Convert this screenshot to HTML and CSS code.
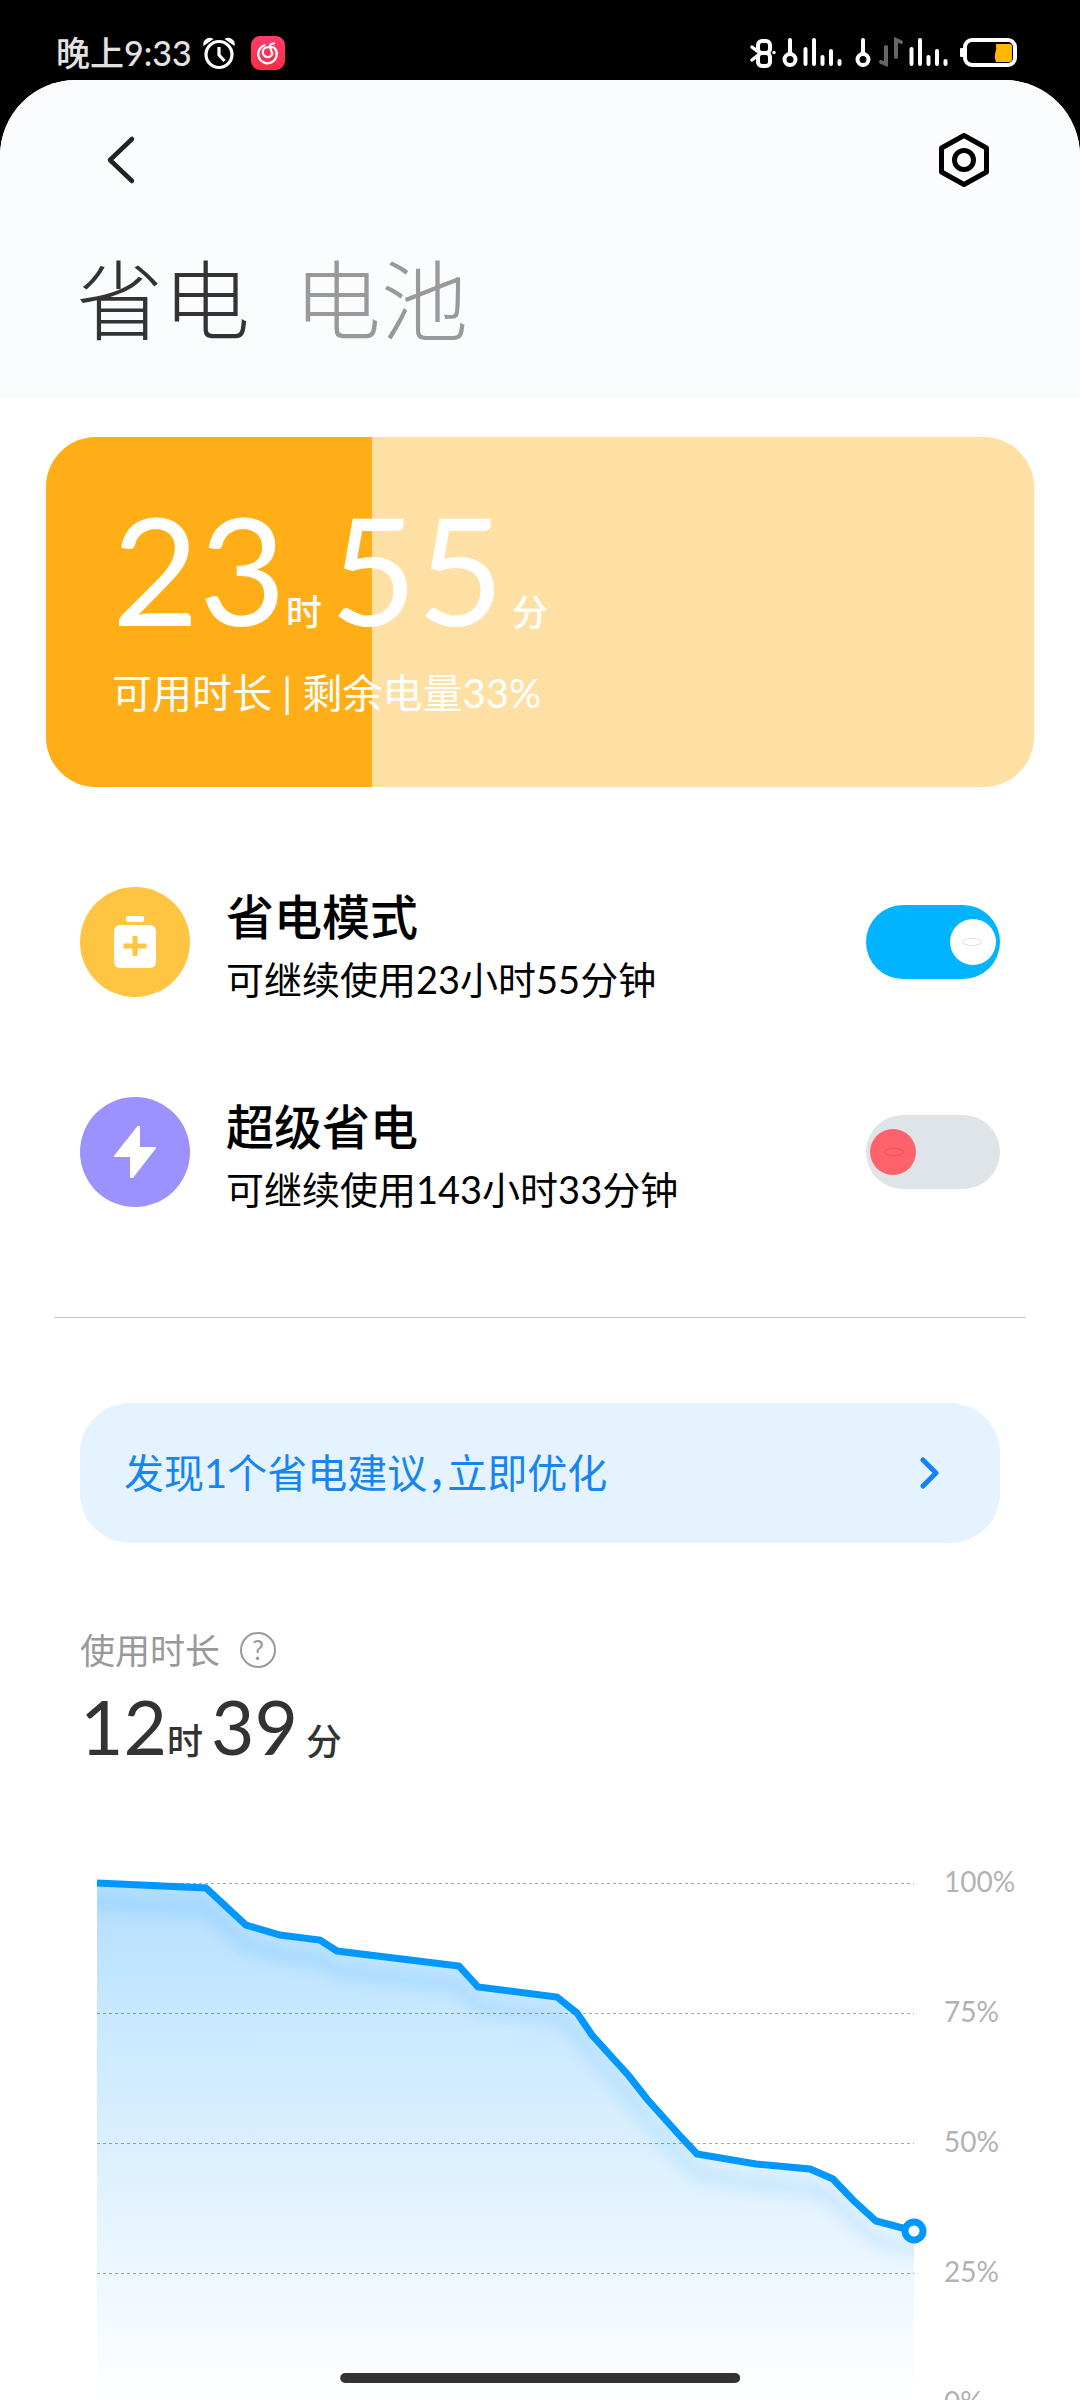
FILE: index.html
```html
<!DOCTYPE html>
<html lang="zh-CN">
<head>
<meta charset="utf-8">
<meta name="viewport" content="width=device-width, initial-scale=1">
<title>省电</title>
<link rel="stylesheet" href="styles.css">
</head>
<body>
<div class="screen">
  <div class="status">
    <div class="status-side">
      <span class="clock">晚上9:33</span>
      <svg class="status-alarm" width="34" height="34" viewBox="0 0 34 34" aria-hidden="true">
        <path d="M1.500 10a6.500 6.500 0 0 1 10-7zM32.500 10a6.500 6.500 0 0 0-10-7z" fill="#fff"/>
        <circle cx="17" cy="18.500" r="13" fill="#000" stroke="#fff" stroke-width="3.200"/>
        <path d="M17 11v8l5.500 6" fill="none" stroke="#fff" stroke-width="3.200"/>
      </svg>
      <svg class="status-music" width="34" height="34" viewBox="0 0 34 34" aria-hidden="true">
        <defs><linearGradient id="music" x1="0" y1="0" x2="0" y2="1"><stop offset="0" stop-color="#fd3d6c"/><stop offset="1" stop-color="#fb2c44"/></linearGradient></defs>
        <rect width="34" height="34" rx="9" fill="url(#music)"/>
        <path d="M13.500 9.200A9.300 9.300 0 1 0 24 12.500Q21.500 10 17.500 11.300a4.900 4.900 0 1 0 3.800 6.500Q20 14 19 10.500q0-3.200 4-3" fill="none" stroke="#fff" stroke-width="2.200" stroke-linecap="round"/>
      </svg>
    </div>
    <svg class="status-icons" width="270" height="34" viewBox="748 36 270 34" aria-hidden="true">
      <g fill="none" stroke="#fff" stroke-width="4" stroke-linecap="round" stroke-linejoin="round">
        <rect x="758" y="41" width="12" height="12" rx="4"/>
        <rect x="758" y="53" width="12" height="13" rx="4"/>
        <path d="M752 47l5 4M752 60l5-4" stroke-width="3.500"/>
        <path d="M790 40v13M863 40v13"/>
        <circle cx="790" cy="59.500" r="5.500"/><circle cx="863" cy="59.500" r="5.500"/>
        <path d="M805.500 49v15M814 40v24M822.500 57v7M831 51v13M839.500 61v3M911.500 49v15M920 40v24M928.500 57v7M937 51v13M945.500 61v3"/>
        <rect x="965" y="40" width="50" height="25" rx="7"/>
      </g>
      <circle cx="774" cy="52.500" r="1.700" fill="#fff"/>
      <path d="M886 47v17l-5-2M896 57V40l5 2" fill="none" stroke="#666" stroke-width="4" stroke-linecap="round"/>
      <rect x="960" y="48" width="4" height="9" rx="1" fill="#fff"/>
      <path d="M996 44h14a2 2 0 0 1 2 2v13a3 3 0 0 1-3 3h-13q-2-4-1-8 2-5 1-10z" fill="#ffb800"/>
    </svg>
  </div>

  <main class="sheet">
    <header class="header">
      <div class="toolbar">
        <button class="icon-button" type="button" aria-label="返回">
          <svg width="60" height="60" viewBox="0 0 60 60"><path d="M40 9L18 30l22 21" fill="none" stroke="#222" stroke-width="4.500" stroke-linecap="round" stroke-linejoin="round"/></svg>
        </button>
        <button class="icon-button" type="button" aria-label="设置">
          <svg width="60" height="60" viewBox="0 0 60 60"><path d="M30 5.500L52.500 18v24L30 54.500 7.500 42V18z" fill="none" stroke="#000" stroke-width="5" stroke-linejoin="round"/><circle cx="30" cy="30" r="9.500" fill="none" stroke="#000" stroke-width="5"/></svg>
        </button>
      </div>
      <nav class="tabs">
        <button class="tab tab-active" type="button" aria-current="page">省电</button>
        <button class="tab" type="button">电池</button>
      </nav>
    </header>

    <section class="battery">
      <div class="battery-level" style="width: 33%"></div>
      <div class="battery-info">
        <p class="battery-time">23<span class="unit">时</span>55<span class="unit unit-end">分</span></p>
        <p class="battery-note">可用时长 | 剩余电量33%</p>
      </div>
    </section>

    <section class="modes">
      <div class="mode">
        <svg class="mode-icon" viewBox="0 0 110 110" aria-hidden="true">
          <circle cx="55" cy="55" r="55" fill="#ffc542"/>
          <rect x="46" y="29" width="18" height="6" rx="2" fill="#fff"/>
          <rect x="34" y="38" width="42" height="43" rx="6" fill="#fff"/>
          <path d="M55 49v20M43.500 59h23" stroke="#ffc542" stroke-width="5"/>
        </svg>
        <label class="mode-text" for="saver">
          <span class="mode-title">省电模式</span>
          <span class="mode-note">可继续使用23小时55分钟</span>
        </label>
        <input class="switch" id="saver" type="checkbox" checked>
      </div>
      <div class="mode">
        <svg class="mode-icon" viewBox="0 0 110 110" aria-hidden="true">
          <circle cx="55" cy="55" r="55" fill="#9c92ff"/>
          <path d="M58 30L35 59h16v21h1.500L75 51H59V30z" fill="#fff" stroke="#fff" stroke-width="2" stroke-linejoin="round"/>
        </svg>
        <label class="mode-text" for="ultra">
          <span class="mode-title">超级省电</span>
          <span class="mode-note">可继续使用143小时33分钟</span>
        </label>
        <input class="switch" id="ultra" type="checkbox">
      </div>
    </section>

    <hr class="divider">

    <a class="advice" href="#usage">
      <span>发现1个省电建议，立即优化</span>
      <svg width="20" height="32" viewBox="0 0 20 32" aria-hidden="true"><path d="M3 3l13 13L3 29" fill="none" stroke="#1383fb" stroke-width="5" stroke-linecap="round" stroke-linejoin="round"/></svg>
    </a>

    <section class="usage" id="usage">
      <h2 class="usage-label">使用时长
        <button class="help" type="button" aria-label="说明">?</button>
      </h2>
      <p class="usage-time">12<span class="unit">时</span>39<span class="unit unit-end">分</span></p>
    </section>

    <section class="chart">
      <svg class="plot" viewBox="0 0 817 520" role="img" aria-label="电量曲线">
        <defs>
          <linearGradient id="fill" gradientUnits="userSpaceOnUse" x1="0" y1="0" x2="0" y2="520"><stop offset="0" stop-color="#b3deff"/><stop offset=".25" stop-color="#c8e8ff"/><stop offset=".5" stop-color="#daeffe"/><stop offset=".75" stop-color="#edf7ff"/><stop offset="1" stop-color="#fff"/></linearGradient>
          <linearGradient id="fade" gradientUnits="userSpaceOnUse" x1="0" y1="0" x2="0" y2="380"><stop offset="0" stop-color="#0094f0" stop-opacity=".1"/><stop offset="1" stop-color="#0094f0" stop-opacity=".08"/></linearGradient>
          <filter id="soft" filterUnits="userSpaceOnUse" x="-40" y="-40" width="900" height="500"><feGaussianBlur stdDeviation="6"/></filter>
          <clipPath id="area"><path d="M0 0L109 5L149 42L183 52L223 57L240 68L313 77L362 83L381 104L460 114L480 130L495 152L513 172L532 193L550 216L584 254L600 271L659 281L713 286L736 296L756 317L779 338L817 348V520H0z"/></clipPath>
        </defs>
        <rect width="817" height="520" fill="url(#fill)" clip-path="url(#area)"/>
        <g clip-path="url(#area)"><path d="M-20 20L109 25L149 62L183 72L223 77L240 88L313 97L362 103L381 124L460 134L480 150L495 172L513 192L532 213L550 236L584 274L600 291L659 301L713 306L736 316L756 337L779 358L837 370" fill="none" stroke="url(#fade)" stroke-width="18" filter="url(#soft)"/></g>
        <path d="M0 .500H817M0 130.500H817M0 260.500H817M0 390.500H817" stroke="#000" stroke-opacity=".35" stroke-dasharray="3 3"/>
        <path d="M0 0L109 5L149 42L183 52L223 57L240 68L313 77L362 83L381 104L460 114L480 130L495 152L513 172L532 193L550 216L584 254L600 271L659 281L713 286L736 296L756 317L779 338L817 348" fill="none" stroke="#0097ff" stroke-width="7"/>
        <circle cx="817" cy="348" r="9" fill="#fff" stroke="#0097ff" stroke-width="7"/>
      </svg>
      <div class="scale">
        <span>100%</span><span>75%</span><span>50%</span><span>25%</span><span>0%</span>
      </div>
    </section>
  </main>
  <div class="home-bar"></div>
</div>
</body>
</html>
```
FILE: styles.css
```css
* {
  box-sizing: border-box;
}

body {
  margin: 0;
  background: #000;
  color: #000;
  font-family: Lato, "Noto Sans CJK SC", sans-serif;
}

p,
h2 {
  margin: 0;
  font-weight: 400;
}

button {
  padding: 0;
  border: 0;
  background: none;
  color: inherit;
  font: inherit;
}

.screen {
  position: relative;
  display: flex;
  flex-direction: column;
  height: 100vh;
  overflow: hidden;
}

/* Status bar */
.status {
  display: flex;
  flex: none;
  align-items: center;
  justify-content: space-between;
  height: 80px;
  padding: 26px 62px 0 56px;
}

.status-side {
  display: flex;
  align-items: center;
}

.clock {
  color: #e2e2e2;
  font-size: 34px;
  font-weight: 500;
  line-height: 40px;
}

.status-alarm {
  margin-left: 10px;
}

.status-music {
  margin-left: 15px;
}

/* Sheet and header */
.sheet {
  flex: 1;
  min-height: 0;
  overflow: hidden;
  border-radius: 76px 76px 0 0;
  background: #fff;
}

.header {
  padding: 50px 86px 36px 76px;
  background: #fbfcfe;
}

.toolbar {
  display: flex;
  justify-content: space-between;
  padding-left: 16px;
}

.icon-button,
.icon-button svg {
  display: block;
}

.tabs {
  display: flex;
  gap: 44px;
  margin-top: 51px;
}

.tab {
  color: #999;
  font-size: 87px;
  font-weight: 300;
  line-height: 120px;
}

.tab-active {
  color: #333;
}

/* Battery card */
.battery {
  position: relative;
  margin: 40px 46px 0;
  overflow: hidden;
  border-radius: 50px;
  background: #fee0a5;
  color: #fff;
}

.battery-level {
  position: absolute;
  inset: 0 auto 0 0;
  background: #ffae17;
}

.battery-info {
  position: relative;
  padding: 71px 66px 64px;
}

.battery-time {
  font-size: 150px;
  line-height: 120px;
}

.unit {
  margin-right: 8px;
  font-size: 36px;
  font-weight: 500;
  line-height: 1;
}

.unit-end {
  margin: 0 0 0 8px;
}

.battery-note {
  margin-top: 33px;
  font-size: 40px;
  line-height: 60px;
}

/* Power modes */
.modes {
  display: grid;
  gap: 100px;
  padding: 100px 80px 110px;
}

.mode {
  display: flex;
  align-items: center;
}

.mode-icon {
  flex: none;
  width: 110px;
  height: 110px;
}

.mode-text {
  display: grid;
  flex: 1;
  gap: 20px;
  margin-left: 36px;
  padding-top: 6px;
}

.mode-title {
  font-size: 48px;
  font-weight: 500;
  line-height: 48px;
}

.mode-note {
  font-size: 38px;
  line-height: 36px;
}

.switch {
  display: grid;
  align-items: center;
  width: 134px;
  height: 74px;
  margin: 0;
  padding: 0 4px;
  border-radius: 37px;
  background: #dfe4e8;
  appearance: none;
}

.switch::before,
.switch::after {
  grid-area: 1 / 1;
  content: "";
}

.switch::before {
  width: 46px;
  height: 46px;
  border-radius: 50%;
  background: #ff626a;
}

.switch::after {
  width: 18px;
  height: 6px;
  margin: 0 14px;
  border: 1px solid rgba(0, 0, 0, 0.12);
  border-radius: 50%;
}

.switch:checked {
  justify-items: end;
  background: #00b4ff;
}

.switch:checked::before {
  background: #fff;
}

.divider {
  height: 1px;
  margin: 0 54px;
  border: 0;
  background: #c8c8c8;
}

/* Advice banner */
.advice {
  display: flex;
  align-items: center;
  justify-content: space-between;
  margin: 85px 80px 0;
  padding: 40px 60px 40px 44px;
  border-radius: 50px;
  background: #e5f2ff;
  color: #1585f2;
  font-size: 40px;
  font-feature-settings: "halt";
  line-height: 60px;
  text-decoration: none;
}

/* Usage */
.usage {
  padding: 87px 80px 0;
}

.usage-label {
  display: flex;
  align-items: center;
  gap: 20px;
  color: #999;
  font-size: 35px;
  line-height: 40px;
}

.help {
  width: 36px;
  height: 36px;
  border: 2px solid #999;
  border-radius: 50%;
  font-size: 26px;
  line-height: 32px;
}

.usage-time {
  margin-top: 21px;
  color: #333;
  font-size: 75px;
  line-height: 70px;
}

/* Chart */
.chart {
  display: flex;
  margin: 122px 64px 0 97px;
}

.plot {
  display: block;
  flex: 1;
  min-width: 0;
  overflow: visible;
}

.scale {
  display: flex;
  flex: none;
  flex-direction: column;
  justify-content: space-between;
  width: 102px;
  margin: -17px 0 -13px;
  padding-left: 30px;
  color: #b2b2b2;
  font-size: 28px;
  line-height: 30px;
}

.home-bar {
  position: absolute;
  bottom: 17px;
  left: 50%;
  width: 37%;
  height: 10px;
  border-radius: 5px;
  background: #333;
  transform: translateX(-50%);
}
```
